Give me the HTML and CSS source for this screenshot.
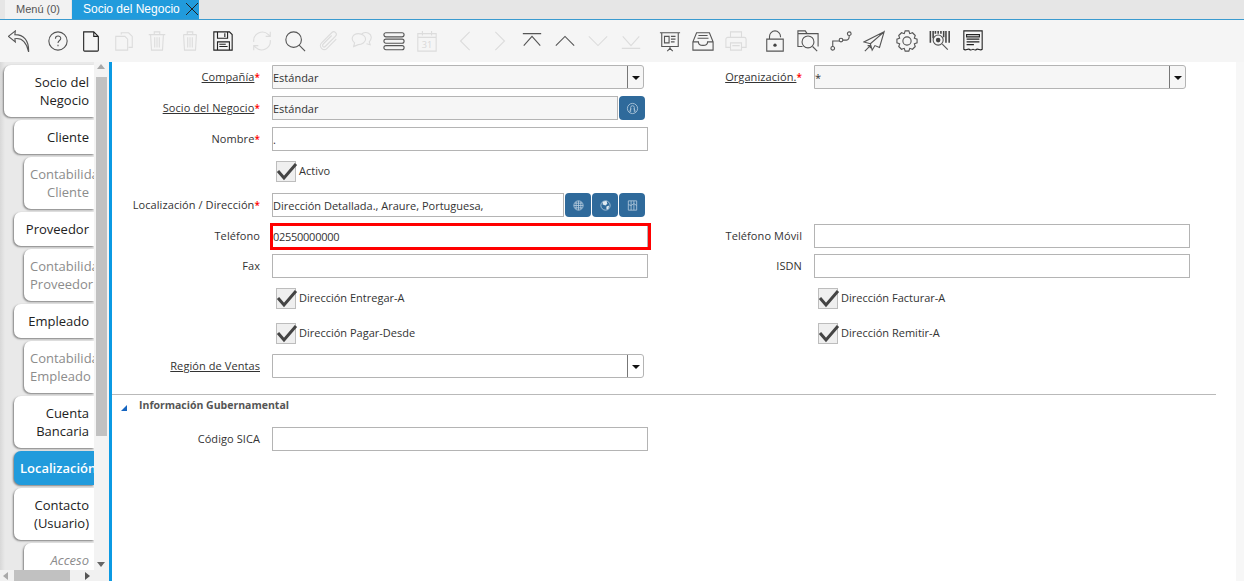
FILE: index.html
```html
<!DOCTYPE html>
<html lang="es">
<head>
<meta charset="utf-8">
<title>Socio del Negocio</title>
<link rel="stylesheet" href="styles.css">
</head>
<body>
<div class="app">
  <header class="tabbar">
    <div class="wintab">Menú (0)</div>
    <div class="wintab active">Socio del Negocio
      <svg class="close" width="14" height="14" viewBox="0 0 14 14"><path d="M1 1l12 12M13 1L1 13"/></svg>
    </div>
  </header>
  <nav class="toolbar">
    <div class="tgroup">
      <span class="tool"><svg viewBox="0 0 24 24"><path d="M8 1L0.500 7l7.500 6-.5-3.500c7-1 12.500 3 15 14.500C23 11 17 5 7.500 5z"/></svg></span>
    </div>
    <div class="tgroup">
      <span class="tool"><svg viewBox="0 0 24 24"><circle cx="12" cy="12" r="10"/><path d="M9.2 9.5c0-4 5.800-3.800 5.800-.3 0 2.300-3 2.300-3 5"/><path d="M12 16v1.800"/></svg></span>
      <span class="tool dark"><svg viewBox="0 0 24 24"><path d="M4 2h11l5 5v15a1 1 0 0 1-1 1H5a1 1 0 0 1-1-1zM15 2v5h5"/></svg></span>
      <span class="tool off"><svg viewBox="0 0 24 24"><path d="M9 5V3h8l4 4v12h-4M3 7h10l3 3v12H3z"/></svg></span>
      <span class="tool off"><svg viewBox="0 0 24 24"><path d="M3 5h18M9 5V2h6v3M5 5l1 17h12l1-17M9.500 8v11M12 8v11M14.500 8v11"/></svg></span>
      <span class="tool off"><svg viewBox="0 0 24 24"><path d="M5 5h14M9 5V2h6v3M5 5l1 17h12l1-17M9.500 8v11M12 8v11M14.500 8v11"/></svg></span>
      <span class="tool dark"><svg viewBox="0 0 24 24"><path d="M2 2h17l3 3v17H2zM6 2v7h11V2M14 3.500v4M6 22v-9h13v9M8 15.500h7M8 18h9"/></svg></span>
    </div>
    <div class="tgroup">
      <span class="tool off"><svg viewBox="0 0 24 24"><path d="M3 13A9.500 9.500 0 0 1 19 5l2 2M21 11A9.500 9.500 0 0 1 5 19l-2-2M21 2v5h-5M3 22v-5h5"/></svg></span>
      <span class="tool"><svg viewBox="0 0 24 24"><circle cx="10.500" cy="10.500" r="8.500"/><path d="M16.500 16.500L23 23"/></svg></span>
      <span class="tool off"><svg viewBox="0 0 24 24"><path d="M21 10L11 20c-4 4-10-2-6-6L16 3c3-3 7 1 4 4L9 18c-2 2-4-1-2-3l9-9"/></svg></span>
      <span class="tool off"><svg viewBox="0 0 24 24"><path d="M9 4c5 0 8 3 8 6s-4 6-8 6l-5 2 1-4C0 10 3 4 9 4zM13 4c5-3 11 0 10 5 0 2-1 3-2 4l1 3-4-1"/></svg></span>
      <span class="tool"><svg viewBox="0 0 24 24"><rect x="1" y="3" width="22" height="4.500" rx="2.200"/><rect x="1" y="10" width="22" height="4.500" rx="2.200"/><rect x="1" y="17" width="22" height="4.500" rx="2.200"/></svg></span>
      <span class="tool off"><svg viewBox="0 0 24 24"><path d="M2 4h20v19H2zM2 8h20M7 1v5M17 1v5"/><text x="12" y="20" class="calday">31</text></svg></span>
    </div>
    <div class="tgroup">
      <span class="tool off"><svg viewBox="0 0 24 24"><path d="M16 2L6 12l10 10"/></svg></span>
      <span class="tool off"><svg viewBox="0 0 24 24"><path d="M8 2l10 10L8 22"/></svg></span>
      <span class="tool"><svg viewBox="0 0 24 24"><path d="M2 4h20M3 17L12 7l9 10"/></svg></span>
      <span class="tool"><svg viewBox="0 0 24 24"><path d="M2 17L12 7l10 10"/></svg></span>
      <span class="tool off"><svg viewBox="0 0 24 24"><path d="M2 7l10 10L22 7"/></svg></span>
      <span class="tool off"><svg viewBox="0 0 24 24"><path d="M3 7l9 10 9-10M2 20h20"/></svg></span>
    </div>
    <div class="tgroup">
      <span class="tool"><svg viewBox="0 0 24 24"><path d="M1 3h22M3 3v15h18V3M12 18v2M12 20l-3 3M12 20l3 3M6 7h5v7H6zM13 7h5M13 10h5M13 13h4"/></svg></span>
      <span class="tool"><svg viewBox="0 0 24 24"><path d="M5 3h14l4 10v9H1v-9zM7 6h10M6 9h12M1 13h6c0 5 10 5 10 0h6"/></svg></span>
      <span class="tool off"><svg viewBox="0 0 24 24"><path d="M6 8V2h12v6M6 19H1V10a2 2 0 0 1 2-2h18a2 2 0 0 1 2 2v9h-5M6 14h12v8H6zM8 17h8"/></svg></span>
    </div>
    <div class="tgroup">
      <span class="tool"><svg viewBox="0 0 24 24"><path d="M6 10V7a6 6 0 0 1 12 0v1M3 10h18v13H3z"/><circle class="solid" cx="12" cy="16.500" r="1.800"/></svg></span>
      <span class="tool"><svg viewBox="0 0 24 24"><path d="M6 18H1V1h8l2 3h12v14M1 4h10"/><circle cx="12" cy="13" r="6.500"/><path d="M17 18l5 5"/></svg></span>
      <span class="tool"><svg viewBox="0 0 24 24"><circle cx="3" cy="20" r="2"/><circle cx="12" cy="11" r="2"/><circle cx="21" cy="4" r="2"/><path d="M3 18v-6h7M14 11h4c2 0 3-1 3-5"/></svg></span>
      <span class="tool"><svg viewBox="0 0 24 24"><path d="M23 2L1 13l7 2zM23 2L8 15l2 7 3-5 5 2zM2 23l6-6M5 17h3v3"/></svg></span>
      <span class="tool"><svg viewBox="0 0 24 24"><circle cx="12" cy="12" r="4.500"/><path d="M10 1h4l1 3 3-1 3 3-1 3 3 1v4l-3 1 1 3-3 3-3-1-1 3h-4l-1-3-3 1-3-3 1-3-3-1v-4l3-1-1-3 3-3 3 1z"/></svg></span>
      <span class="tool"><svg viewBox="0 0 24 24"><path class="bars" d="M1.500 1v13M4.500 1v8M7 1v3M10 1v3M13 1v3M16 1v7M18.500 1v13M22 1v13"/><circle cx="10" cy="11" r="5.500"/><circle class="solid" cx="10" cy="11" r="2.500"/><path d="M14.500 15.500l6 6"/></svg></span>
      <span class="tool dark"><svg viewBox="0 0 24 24"><path d="M2 1h20v20c-2 2-4-1-6 0-2 2-3 0-4 0s-2 2-4 0c-2-1-4 2-6 0zM5 5h14v2.500H5zM5 10h14M5 13h14M5 16h8"/></svg></span>
    </div>
  </nav>
  <main class="workspace">
    <aside class="sidebar">
      <div class="tabview">
        <ul class="tabs">
          <li class="tab l0">Socio del Negocio</li>
          <li class="tab l1">Cliente</li>
          <li class="tab l2">Contabilidad Cliente</li>
          <li class="tab l1">Proveedor</li>
          <li class="tab l2">Contabilidad Proveedor</li>
          <li class="tab l1">Empleado</li>
          <li class="tab l2">Contabilidad Empleado</li>
          <li class="tab l1">Cuenta Bancaria</li>
          <li class="tab l1 current">Localización</li>
          <li class="tab l1">Contacto (Usuario)</li>
          <li class="tab l2 access">Acceso</li>
        </ul>
        <div class="vscroll">
          <span class="arrow up"></span>
          <span class="vthumb"></span>
          <span class="arrow down"></span>
        </div>
      </div>
      <div class="hscroll">
        <span class="arrow left"></span>
        <span class="hthumb"></span>
        <span class="arrow right"></span>
      </div>
    </aside>
    <section class="content">
      <form class="form">
        <label class="lbl"><span class="link">Compañía</span><b>*</b></label>
        <div class="field"><div class="combo ro w372"><span class="val">Estándar</span><i class="drop"></i></div></div>
        <label class="lbl"><span class="link">Organización.</span><b>*</b></label>
        <div class="field"><div class="combo ro w372"><span class="val">*</span><i class="drop"></i></div></div>

        <label class="lbl"><span class="link">Socio del Negocio</span><b>*</b></label>
        <div class="field wrap"><div class="input ro grow">Estándar</div>
          <span class="btn"><svg viewBox="0 0 14 14"><circle cx="7" cy="7" r="5.500"/><path d="M5 11V6a2 2 0 0 1 4 0v5M3.500 10c1-.5 1.500-1.500 2-3M10.500 10c-1-.5-1.500-1.500-2-3"/></svg></span>
        </div>
        <span class="skip"></span>

        <label class="lbl">Nombre<b>*</b></label>
        <div class="field"><div class="input">.</div></div>
        <span class="skip"></span>

        <span class="lbl"></span>
        <label class="check"><span class="box"><svg viewBox="0 0 22 22"><path d="M2 10l6 7L20 3"/></svg></span>Activo</label>
        <span class="skip"></span>

        <label class="lbl">Localización / Dirección<b>*</b></label>
        <div class="field wrap"><div class="input grow">Dirección Detallada., Araure, Portuguesa,</div>
          <span class="btn"><svg viewBox="0 0 14 14"><circle cx="7" cy="7" r="5"/><path d="M2 7h10M3 4.500h8M3 9.500h8M7 2v10M4.500 3v8M9.500 3v8"/></svg></span>
          <span class="btn"><svg viewBox="0 0 14 14"><circle cx="7" cy="7" r="5"/><path class="fill" d="M4 3l4-1 1 3-2 2-3-1zM8 8l3-1-1 4-2 0z"/></svg></span>
          <span class="btn"><svg viewBox="0 0 14 14"><path d="M2.500 2h9v10h-9zM5.500 2v10M8.500 2v10M2.500 6l3 1 3-2 3 2"/></svg></span>
        </div>
        <span class="skip"></span>

        <label class="lbl">Teléfono</label>
        <div class="field"><div class="input marked">02550000000</div></div>
        <label class="lbl">Teléfono Móvil</label>
        <div class="field"><div class="input"></div></div>

        <label class="lbl">Fax</label>
        <div class="field"><div class="input"></div></div>
        <label class="lbl">ISDN</label>
        <div class="field"><div class="input"></div></div>

        <span class="lbl"></span>
        <label class="check"><span class="box"><svg viewBox="0 0 22 22"><path d="M2 10l6 7L20 3"/></svg></span>Dirección Entregar-A</label>
        <span class="lbl"></span>
        <label class="check"><span class="box"><svg viewBox="0 0 22 22"><path d="M2 10l6 7L20 3"/></svg></span>Dirección Facturar-A</label>

        <span class="lbl"></span>
        <label class="check"><span class="box"><svg viewBox="0 0 22 22"><path d="M2 10l6 7L20 3"/></svg></span>Dirección Pagar-Desde</label>
        <span class="lbl"></span>
        <label class="check"><span class="box"><svg viewBox="0 0 22 22"><path d="M2 10l6 7L20 3"/></svg></span>Dirección Remitir-A</label>

        <label class="lbl"><span class="link">Región de Ventas</span></label>
        <div class="field"><div class="combo w372"><span class="val"></span><i class="drop"></i></div></div>
        <span class="skip"></span>
      </form>
      <div class="group">
        <h2 class="grouptitle"><i class="tri"></i>Información Gubernamental</h2>
        <div class="form single">
          <label class="lbl">Código SICA</label>
          <div class="field"><div class="input"></div></div>
        </div>
      </div>
    </section>
    <div class="pagescroll"></div>
  </main>
</div>
</body>
</html>
```

FILE: styles.css
```css
* { box-sizing: border-box; }
html, body { margin: 0; height: 100%; overflow: hidden; background: #fff; }
body { font-family: "Open Sans", "Noto Sans", sans-serif; font-size: 11px; color: #333; }
.app { width: 1244px; height: 581px; display: flex; flex-direction: column; overflow: hidden; }

/* window tabs */
.tabbar { flex: 0 0 20px; display: flex; align-items: stretch; background: #e6e6e6; border-bottom: 1px solid #3a9bd0; padding-left: 5px; gap: 1px; }
.wintab { width: 66px; background: #f2f2f2; font-family: "Liberation Sans", sans-serif; font-size: 11px; color: #555; line-height: 19px; text-align: center; position: relative; }
.wintab.active { width: 127px; background: #219bdc; color: #fff; text-align: left; padding-left: 11px; font-size: 12px; }
.close { position: absolute; right: 0; top: 2px; fill: none; stroke: #222; stroke-width: 1; }

/* toolbar */
.toolbar { flex: 0 0 42px; display: flex; align-items: center; background: #f5f5f5; padding-left: 2px; gap: 6px; }
.tgroup { display: flex; }
.tool { width: 33px; height: 26px; display: flex; align-items: center; justify-content: center; }
.tool svg { width: 22px; height: 22px; fill: none; stroke: #555; stroke-width: 1.200; }
.tool.dark svg { stroke: #222; }
.tool.off svg { stroke: #dcdcdc; }
.calday { font-family: "Open Sans", sans-serif; font-size: 10px; text-anchor: middle; fill: #d8d8d8; stroke: none; }
.tool svg .bars { stroke-width: 1.700; stroke: #444; }
.tool svg .solid { fill: #444; stroke: none; }

/* workspace */
.workspace { flex: 1; display: flex; min-height: 0; }
.sidebar { flex: 0 0 109px; display: flex; flex-direction: column; background: #fff; min-height: 0; }
.tabview { flex: 1; display: flex; min-height: 0; }
.tabs { list-style: none; margin: 0; padding: 3px 0 0; width: 94px; flex: none; overflow: hidden; background: linear-gradient(90deg, #d8d8d8, #e9e9e9 5px); display: flex; flex-direction: column; gap: 3px; }
.tab { flex: none; background: #fff; border-radius: 7px 0 0 7px; font-size: 13px; line-height: 18px; color: #222; text-align: right; padding: 8px 5px 8px 6px; box-shadow: -1px 1px 2px rgba(0,0,0,.45); }
.tab.l0 { margin-left: 4px; padding-left: 16px; }
.tab.l1 { margin-left: 14px; }
.tab.l2 { margin-left: 24px; color: #8c8c8c; }
.tab.current { background: #219bdc; color: #fff; font-weight: 600; }
.tab.access { font-style: italic; }

.vscroll { flex: 1; background: #f3f3f3; display: flex; flex-direction: column; align-items: center; position: relative; width: 14px; }
.vthumb { position: absolute; top: 15px; left: 2px; width: 11px; height: 359px; background: #c1c1c1; }
.arrow { width: 0; height: 0; border: 4px solid transparent; position: absolute; }
.arrow.up { top: 2px; left: 3px; border-top: 0; border-bottom: 5px solid #a8a8a8; }
.arrow.down { bottom: 3px; left: 3px; border-bottom: 0; border-top: 5px solid #666; }
.hscroll { flex: 0 0 11px; background: #f1f1f1; position: relative; }
.hthumb { position: absolute; left: 14px; top: 0; width: 56px; height: 11px; background: #c1c1c1; }
.arrow.left { left: 3px; top: 2px; border-left: 0; border-right: 5px solid #aaa; }
.arrow.right { left: 85px; top: 2px; border-right: 0; border-left: 5px solid #555; }

/* content */
.content { flex: 1; border-left: 3px solid #0b9ae3; min-width: 0; padding-top: 3px; padding-right: 20px; }
.pagescroll { flex: 0 0 8px; background: #f7f7f7; }
.form { display: grid; grid-template-columns: 160px 376px 166px 376px; grid-template-rows: 31px 31px 33px 33px 31px 30px 33px 35px 32px 24px; align-items: start; }
.form.single { grid-template-rows: 24px; }
.lbl { display: block; font-size: 11px; line-height: 16px; text-align: right; padding: 4px 12px 0 0; color: #333; white-space: nowrap; letter-spacing: .08px; }
.lbl b { color: #f00; font-weight: 600; font-size: 10px; line-height: 10px; }
.link { text-decoration: underline; }
.field { display: flex; }
.wrap { width: 373px; gap: 1px; }
.grow { flex: 1; min-width: 0; }
.input, .combo { height: 24px; border: 1px solid #b4b4b4; background: #fff; line-height: 23px; padding-left: 0; font-size: 11px; color: #333; width: 100%; }
.ro { background: #f6f6f6; }
.combo { display: flex; justify-content: space-between; border-radius: 0 3px 3px 0; padding-right: 0; }
.w372 { width: 372px; }
.drop { width: 16px; border-left: 1px solid #777; position: relative; flex: none; }
.drop::after { content: ""; position: absolute; left: 4px; top: 10px; border: 4px solid transparent; border-bottom: 0; border-top-color: #111; }
.marked { position: relative; letter-spacing: -.27px; }
.marked::after { content: ""; position: absolute; left: -3px; right: -4px; top: -2px; bottom: -3px; border: 3px solid #f00; }
.btn { width: 26px; height: 24px; border-radius: 4px; background: #2f6a9b; display: flex; align-items: center; justify-content: center; flex: none; }
.btn svg { width: 13px; height: 13px; fill: none; stroke: #b4cbdd; stroke-width: .9; }
.btn .fill { fill: #dfe9f1; stroke: none; }
.check { display: flex; align-items: center; gap: 3px; height: 22px; padding-left: 4px; color: #333; line-height: 22px; }
.box { width: 20px; height: 21px; background: #efefef; border: 1px solid #bdbdbd; display: block; flex: none; }
.box svg { display: block; width: 22px; height: 22px; margin: -1px 0 0 -1px; overflow: visible; fill: none; stroke: #444; stroke-width: 3; }
.skip { display: block; grid-column: span 2; }

.group { margin-top: 16px; border-top: 1px solid #b9b9b9; }
.grouptitle { margin: 0 0 11px; height: 21px; display: flex; align-items: center; padding: 0 0 0 9px; font-family: "Open Sans", sans-serif; font-size: 10.5px; font-weight: 700; line-height: 21px; color: #555; }
.tri { width: 0; height: 0; border-style: solid; border-width: 0 0 6px 6px; border-color: transparent transparent #1565c0 transparent; margin-right: 12px; margin-top: 5px; }
```
